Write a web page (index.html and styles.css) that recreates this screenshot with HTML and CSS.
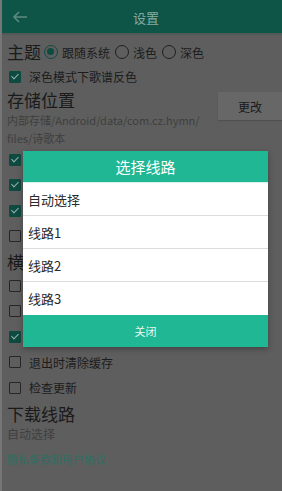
FILE: index.html
```html
<!DOCTYPE html>
<html lang="zh">
<head>
<meta charset="utf-8">
<link rel="stylesheet" href="styles.css">
</head>
<body>
<div class="page">
  <header class="bar">
    <svg class="back" width="16" height="12" viewBox="0 0 16 12"><path d="M15 6H2M7 1L2 6l5 5" fill="none" stroke="#5d8a80" stroke-width="1.6"/></svg>
    <div class="title">设置</div>
  </header>
  <main class="content">
    <div class="theme-row">
      <span class="h">主题</span>
      <span class="radio on"></span><span class="rl">跟随系统</span>
      <span class="radio"></span><span class="rl">浅色</span>
      <span class="radio"></span><span class="rl">深色</span>
    </div>
    <div class="cb-row"><span class="cb on"></span><span>深色模式下歌谱反色</span></div>
    <div class="store">
      <div class="store-text">
        <div class="h">存储位置</div>
        <div class="sub">内部存储/Android/data/com.cz.hymn/<br>files/诗歌本</div>
      </div>
      <div class="btn">更改</div>
    </div>
    <div class="cb-row tight"><span class="cb on"></span><span class="hidden-text">歌谱显示和弦</span></div>
    <div class="cb-row tight"><span class="cb on"></span></div>
    <div class="cb-row tight"><span class="cb on"></span></div>
    <div class="cb-row tight"><span class="cb"></span></div>
    <div class="h h2">横</div>
    <div class="cb-row tight"><span class="cb"></span></div>
    <div class="cb-row tight"><span class="cb"></span></div>
    <div class="cb-row tight"><span class="cb on"></span></div>
    <div class="cb-row tight"><span class="cb"></span><span>退出时清除缓存</span></div>
    <div class="cb-row tight"><span class="cb"></span><span>检查更新</span></div>
    <div class="h h3">下载线路</div>
    <div class="sub sub-lg">自动选择</div>
    <div class="link">隐私条款和用户协议</div>
  </main>
  <div class="dialog">
    <div class="dtitle">选择线路</div>
    <div class="item">自动选择</div>
    <div class="item">线路1</div>
    <div class="item">线路2</div>
    <div class="item last">线路3</div>
    <div class="close">关闭</div>
  </div>
</div>
</body>
</html>
```
FILE: styles.css
```css
* { box-sizing: border-box; }
html, body { margin: 0; padding: 0; }
body {
  width: 282px; height: 491px; overflow: hidden;
  background: #5f5f5f;
  font-family: "Noto Sans CJK SC", "Noto Sans", sans-serif;
  color: #1c1c1c;
}
.page {
  position: relative;
  width: 282px; height: 491px;
  border-left: 2px solid #767676;
  background: #5e5e5e;
}
.bar {
  height: 35px;
  background: #0e5547;
  border-bottom: 2px solid #4f5a58;
  display: flex; align-items: center;
  position: relative;
}
.back { margin-left: 10px; }
.title {
  position: absolute; left: 0; right: 0; top: 8px;
  text-align: center; font-size: 13px; color: #86aaa1;
  padding-left: 8px;
}
.content { padding: 5px 0 0 5px; }
.h { font-size: 17px; line-height: 22px; color: #1a1a1a; }
.theme-row { display: flex; align-items: center; height: 24px; font-size: 12px; }
.theme-row .h { margin-right: 3px; }
.radio {
  width: 14px; height: 14px; border-radius: 50%;
  border: 1.5px solid #202020; margin-right: 4px; flex: none;
  position: relative;
}
.radio.on { border-color: #0f4a40; }
.radio.on::after {
  content: ""; position: absolute; left: 2px; top: 2px;
  width: 7px; height: 7px; border-radius: 50%; background: #0f4a40;
}
.rl { margin-right: 5px; color: #1c1c1c; }
.cb-row {
  display: flex; align-items: center; height: 25px;
  font-size: 12px; padding-left: 1px;
}
.cb-row.tight { height: 25.5px; }
.cb {
  width: 12px; height: 12px; border: 1.5px solid #262626; border-radius: 1px;
  margin: 0 8px 0 1px; flex: none; position: relative;
}
.cb.on { background: #0e4a40; border-color: #0e4a40; }
.cb.on::after {
  content: ""; position: absolute; left: 3px; top: 0px;
  width: 3px; height: 6px; border: solid #8fb3aa; border-width: 0 1.5px 1.5px 0;
  transform: rotate(45deg);
}
.hidden-text { font-size: 12px; }
.store { display: flex; align-items: flex-start; margin-top: 0; }
.store-text { flex: 1; }
.sub { font-size: 11px; line-height: 18px; color: #3e3e3e; }
.sub-lg { font-size: 12px; }
.btn {
  width: 64px; height: 28px; margin-top: 3px;
  background: #676767; color: #1a1a1a; font-size: 12px;
  display: flex; align-items: center; justify-content: center;
  box-shadow: 0 1px 1px rgba(0,0,0,0.15);
}
.h2 { margin-top: 2px; }
.h3 { margin-top: 2px; }
.link { font-size: 11px; color: #2f6f60; margin-top: 8px; }
.dialog {
  position: absolute; left: 21px; top: 151px; width: 245px;
  background: #fff;
  box-shadow: 0 2px 6px rgba(0,0,0,0.3);
}
.dtitle {
  height: 32px; background: #1fb794; color: #fff;
  font-size: 15px; display: flex; align-items: center; justify-content: center;
  border-bottom: 1px solid #d6f4ec;
}
.item {
  height: 33px; display: flex; align-items: center;
  padding-left: 5px; font-size: 13px; color: #2a2a2a;
  border-bottom: 1px solid #dcdcdc;
}
.item.last { border-bottom: none; }
.close {
  height: 32px; background: #1fb794; color: #e8f7f2;
  font-size: 11px; display: flex; align-items: center; justify-content: center;
}
```
